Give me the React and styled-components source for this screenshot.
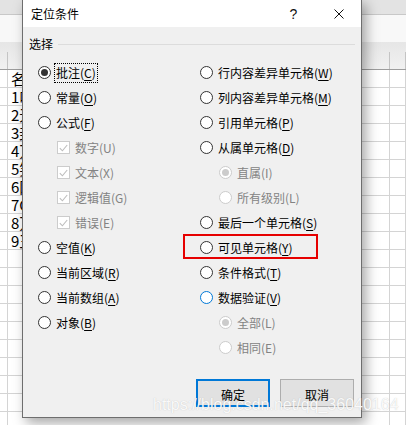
import React from "react";
import styled, { createGlobalStyle } from "styled-components";

const GlobalStyle = createGlobalStyle`
  html, body {
    margin: 0;
    padding: 0;
    background: #fff;
  }
  body {
    width: 406px;
    height: 425px;
    overflow: hidden;
    font-family: "Noto Sans CJK SC", "Noto Sans", sans-serif;
  }
`;

const Sheet = styled.div`
  position: relative;
  width: 406px;
  height: 425px;
  overflow: hidden;
  background: #fff;
`;

const TabStrip = styled.div`
  height: 14px;
  background: #e3e3e3;
  border-bottom: 1px solid #c8c8c8;
`;

const Ribbon = styled.div`
  height: 27px;
  background: #f8f8f8;
`;

const HeaderRow = styled.div`
  height: 27px;
  display: grid;
  grid-template-columns: 8px 382px 1fr;
  background: linear-gradient(#e6e6e6, #f1f1f1);
  border-bottom: 1px solid #9d9d9d;
`;

const HeaderCell = styled.div`
  background: linear-gradient(#c4c4c4, #c4c4c4) right bottom / 1px 17px no-repeat;
`;

const GridRow = styled.div`
  height: 17px;
  display: grid;
  grid-template-columns: 8px 382px 1fr;
  border-bottom: 1px solid #d4d4d4;
`;

const Cell = styled.div`
  border-right: 1px solid #d4d4d4;
  padding-left: 3px;
  font-size: 15px;
  line-height: 17px;
  color: #000;
  white-space: nowrap;
  overflow: hidden;
`;

const Dialog = styled.div`
  position: absolute;
  left: 22px;
  top: -1px;
  width: 340px;
  height: 419px;
  box-sizing: border-box;
  border: 1px solid #6e6e6e;
  box-shadow: 4px 5px 12px rgba(0, 0, 0, 0.35);
  display: flex;
  flex-direction: column;
  background: #f0f0f0;
`;

const TitleBar = styled.div`
  height: 27px;
  background: #fff;
  display: flex;
  align-items: center;
  padding-left: 8px;
  font-size: 12px;
  line-height: 16px;
  color: #000;
`;

const Title = styled.span`
  flex: 1;
`;

const TitleButton = styled.div`
  width: 45px;
  height: 27px;
  display: flex;
  align-items: center;
  justify-content: center;
  font-family: "Liberation Sans", sans-serif;
  font-size: 14px;
  color: #111;
`;

const Body = styled.div`
  flex: 1;
  display: flex;
  flex-direction: column;
  padding: 9px 6px 10px 6px;
`;

const GroupHeader = styled.div`
  height: 16px;
  display: flex;
  align-items: center;
  gap: 5px;
  font-size: 12px;
  line-height: 16px;
  color: #000;
`;

const GroupLine = styled.div`
  flex: 1;
  height: 1px;
  background: #dcdcdc;
`;

const Options = styled.div`
  display: grid;
  grid-template-columns: 162px 1fr;
  padding-left: 9px;
  margin-top: 8px;
`;

const Column = styled.div`
  display: flex;
  flex-direction: column;
`;

const Row = styled.div`
  position: relative;
  height: 25px;
  display: flex;
  align-items: center;
  gap: 5px;
  padding-left: ${p => (p.$indent ? "19px" : "0")};

  ${p =>
    p.$marked &&
    `
    &::after {
      content: "";
      position: absolute;
      left: -17px;
      top: -1px;
      width: 135px;
      height: 25px;
      box-sizing: border-box;
      border: 2px solid #e60000;
    }
  `}
`;

const RadioCircle = styled.span`
  width: 13px;
  height: 13px;
  flex: none;
  box-sizing: border-box;
  border-radius: 50%;
  background: #fff;
  border: 1px solid
    ${p => (p.$disabled ? "#cccccc" : p.$hover ? "#0078d7" : "#333333")};
  display: flex;
  align-items: center;
  justify-content: center;

  &::after {
    content: "";
    width: 7px;
    height: 7px;
    border-radius: 50%;
    background: ${p => (p.$disabled ? "#cccccc" : "#333333")};
    display: ${p => (p.$checked ? "block" : "none")};
  }
`;

const CheckSquare = styled.span`
  width: 13px;
  height: 13px;
  flex: none;
  box-sizing: border-box;
  border: 1px solid #cccccc;
  background: #fff;
  display: flex;
  align-items: center;
  justify-content: center;
`;

const Label = styled.span`
  font-size: 12px;
  line-height: 16px;
  white-space: nowrap;
  color: ${p => (p.$disabled ? "#838383" : "#000")};
  ${p =>
    p.$focused &&
    `
    margin-left: -2px;
    padding: 1px 1px;
    border: 1px dotted #000;
  `}

  u {
    text-decoration-thickness: 1px;
    text-underline-offset: 2px;
  }
`;

const ButtonBar = styled.div`
  margin-top: auto;
  display: flex;
  justify-content: flex-end;
  gap: 10px;
  padding-right: 1px;
`;

const Button = styled.button`
  width: 74px;
  height: 28px;
  box-sizing: border-box;
  background: #e1e1e1;
  border: ${p => (p.$default ? "2px solid #0078d7" : "1px solid #adadad")};
  font-family: "Noto Sans CJK SC", sans-serif;
  font-size: 12px;
  line-height: 16px;
  color: #000;
  padding: 0;
  padding-top: 3px;
`;

const Watermark = styled.div`
  position: absolute;
  left: 153px;
  top: 395px;
  font-family: "Liberation Sans", sans-serif;
  font-size: 16px;
  line-height: 20px;
  color: rgba(255, 255, 255, 0.92);
  text-shadow: 0 0 1px rgba(150, 150, 150, 0.55);
  white-space: nowrap;
  pointer-events: none;
`;

const CheckMark = () => (
  <svg width="9" height="8" viewBox="0 0 9 8">
    <path d="M0.8 4.2 L3.4 6.8 L8.2 1" fill="none" stroke="#bdbdbd" strokeWidth="1.1" />
  </svg>
);

const CloseIcon = () => (
  <svg width="10" height="10" viewBox="0 0 10 10">
    <path d="M0.5 0.5 L9.5 9.5 M9.5 0.5 L0.5 9.5" stroke="#111" strokeWidth="1" />
  </svg>
);

const Option = ({ text, keyChar, checked, disabled, hover, focused, indent, marked, check }) => (
  <Row $indent={indent} $marked={marked}>
    {check ? (
      <CheckSquare>
        <CheckMark />
      </CheckSquare>
    ) : (
      <RadioCircle $checked={checked} $disabled={disabled} $hover={hover} />
    )}
    <Label $disabled={disabled} $focused={focused}>
      {text}(
      {disabled ? keyChar : <u>{keyChar}</u>})
    </Label>
  </Row>
);

const leftOptions = [
  { text: "批注", keyChar: "C", checked: true, focused: true },
  { text: "常量", keyChar: "O" },
  { text: "公式", keyChar: "F" },
  { text: "数字", keyChar: "U", check: true, disabled: true, indent: true },
  { text: "文本", keyChar: "X", check: true, disabled: true, indent: true },
  { text: "逻辑值", keyChar: "G", check: true, disabled: true, indent: true },
  { text: "错误", keyChar: "E", check: true, disabled: true, indent: true },
  { text: "空值", keyChar: "K" },
  { text: "当前区域", keyChar: "R" },
  { text: "当前数组", keyChar: "A" },
  { text: "对象", keyChar: "B" },
];

const rightOptions = [
  { text: "行内容差异单元格", keyChar: "W" },
  { text: "列内容差异单元格", keyChar: "M" },
  { text: "引用单元格", keyChar: "P" },
  { text: "从属单元格", keyChar: "D" },
  { text: "直属", keyChar: "I", checked: true, disabled: true, indent: true },
  { text: "所有级别", keyChar: "L", disabled: true, indent: true },
  { text: "最后一个单元格", keyChar: "S" },
  { text: "可见单元格", keyChar: "Y", marked: true },
  { text: "条件格式", keyChar: "T" },
  { text: "数据验证", keyChar: "V", hover: true },
  { text: "全部", keyChar: "L", checked: true, disabled: true, indent: true },
  { text: "相同", keyChar: "E", disabled: true, indent: true },
];

const cellTexts = ["名称", "1叫", "2无", "3封", "4万", "5笑", "6网", "7C", "8万", "9王"];

export default function App() {
  const rows = Array.from({ length: 20 }, (_, i) => cellTexts[i] || "");

  return (
    <>
      <GlobalStyle />
      <Sheet>
        <TabStrip />
        <Ribbon />
        <HeaderRow>
          <HeaderCell />
          <HeaderCell />
          <HeaderCell />
        </HeaderRow>
        {rows.map((t, i) => (
          <GridRow key={i}>
            <Cell />
            <Cell>{t}</Cell>
            <Cell />
          </GridRow>
        ))}

        <Dialog>
          <TitleBar>
            <Title>定位条件</Title>
            <TitleButton>?</TitleButton>
            <TitleButton>
              <CloseIcon />
            </TitleButton>
          </TitleBar>
          <Body>
            <GroupHeader>
              选择
              <GroupLine />
            </GroupHeader>
            <Options>
              <Column>
                {leftOptions.map(o => (
                  <Option key={o.text} {...o} />
                ))}
              </Column>
              <Column>
                {rightOptions.map(o => (
                  <Option key={o.text} {...o} />
                ))}
              </Column>
            </Options>
            <ButtonBar>
              <Button $default>确定</Button>
              <Button>取消</Button>
            </ButtonBar>
          </Body>
        </Dialog>

        <Watermark>https://blog.csdn.net/qq_36040164</Watermark>
      </Sheet>
    </>
  );
}
